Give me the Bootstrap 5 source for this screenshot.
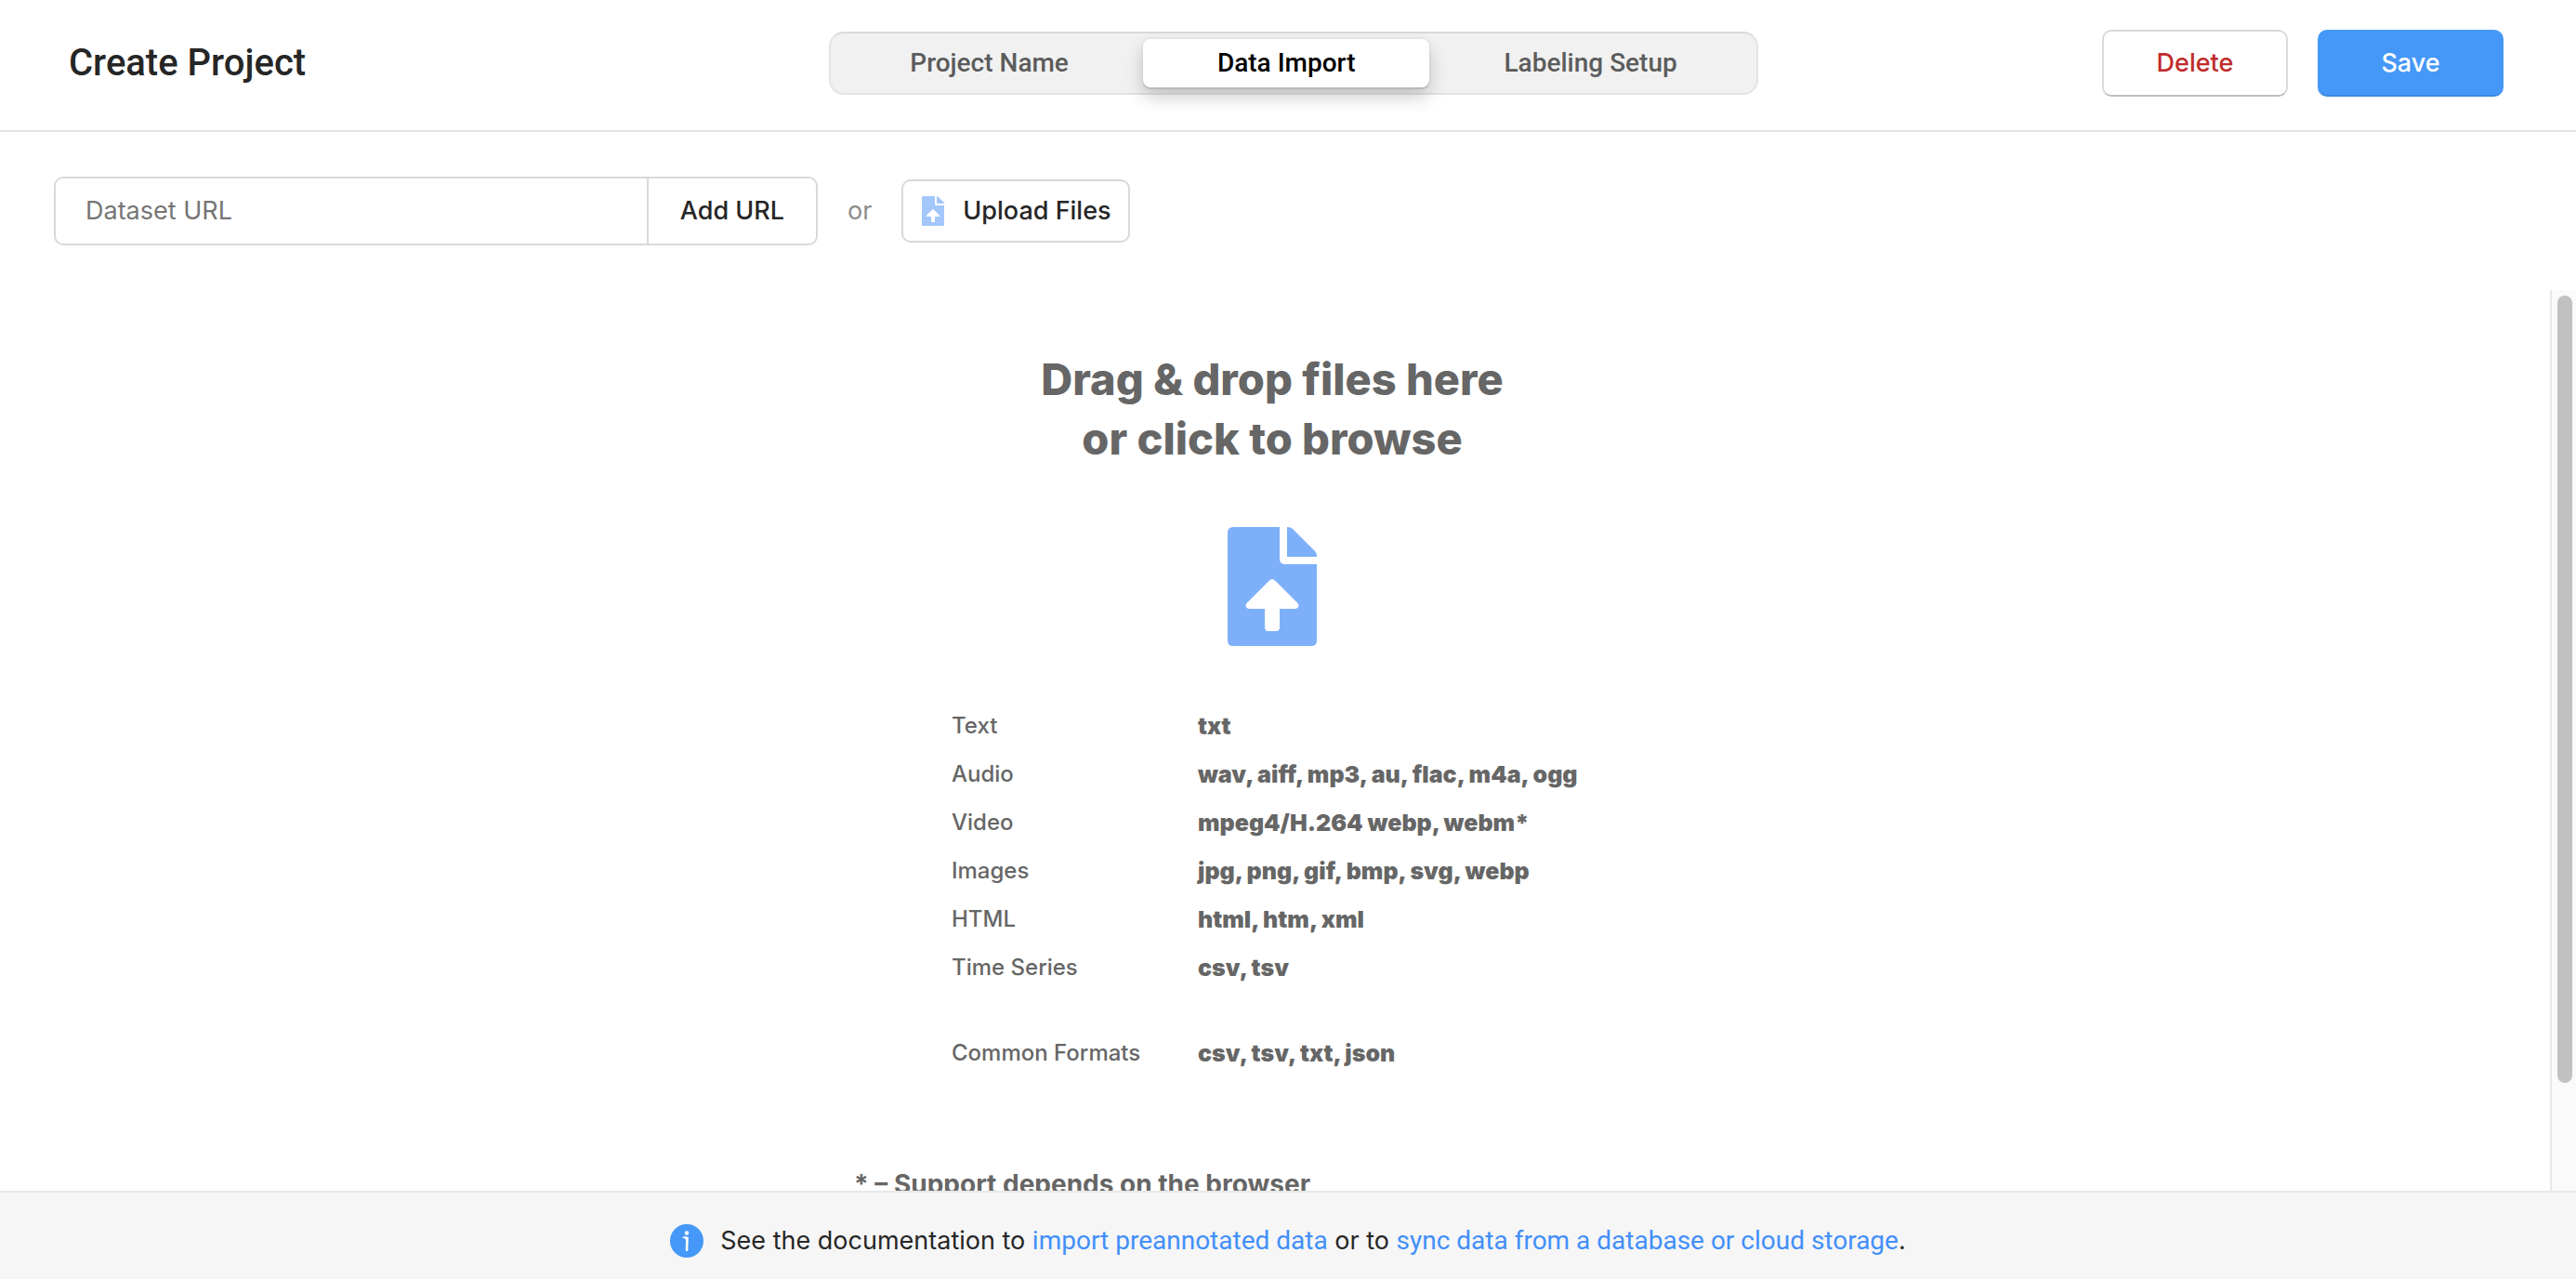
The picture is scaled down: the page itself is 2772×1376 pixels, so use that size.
<!DOCTYPE html>
<html lang="en">
<head>
<meta charset="utf-8">
<meta name="viewport" content="width=device-width, initial-scale=1">
<title>Create Project</title>
<link href="https://cdn.jsdelivr.net/npm/bootstrap@5.3.0/dist/css/bootstrap.min.css" rel="stylesheet">
<style>
  body { font-family: Inter, "Liberation Sans", sans-serif; font-size: 27px; line-height: 36px; color: #262626; }
  .topbar { padding: 32px 78px 36px 74px; border-bottom: 2px solid #e3e3e3; font-family: Roboto, sans-serif; }
  .topbar h1 { font-size: 40px; line-height: 48px; font-weight: 500; }
  .steps { height: 68px; padding: 6px 5px; border: 2px solid #e3e3e3; border-top-color: #d9d9d9; border-radius: 16px; background: #f1f1f1; }
  .step { padding: 0 80px; border: 0; border-radius: 8px; background: none; font-size: 28px; line-height: 52px; font-weight: 500; color: #5c5c5c; }
  .step.active { background: #fff; color: #000; box-shadow: 0 2px 0 #bababa, 0 10px 20px rgba(0,0,0,.2), 0 0 4px rgba(0,0,0,.08); }
  .act { min-width: 200px; height: 72px; border: 2px solid #d9d9d9; border-bottom-color: #bfbfbf; border-radius: 10px; font-family: Inter, sans-serif; font-size: 27px; font-weight: 500; }
  .act-delete, .act-delete:hover { color: #c02b2b; background: #fff; }
  .act-save, .act-save:hover { color: #fff; background: #4598f7; border-color: #4598f7; border-bottom-color: #3c88e0; }
  .toolbar { padding: 48px 64px 48px 58px; gap: 32px; }
  .url-group { width: 822px; height: 74px; border: 2px solid #d9d9d9; border-radius: 10px; }
  .url-group input { border: 0; padding: 0 32px; min-width: 0; outline: 0; background: none; }
  .url-group input::placeholder { color: #757575; opacity: 1; }
  .url-group button { min-width: 182px; border: 0; border-left: 2px solid #d9d9d9; background: none; font-weight: 500; color: #262626; }
  .or-word { color: #8c8c8c; }
  .upload { min-width: 246px; height: 68px; gap: 20px; padding: 0 16px 0 20px; border: 2px solid #d9d9d9; border-radius: 10px; background: #fff; font-weight: 500; color: #262626; }
  .upload svg { color: #a3c6fb; }
  .work { min-height: 0; }
  .drop-scroll { min-width: 0; padding: 64px 64px 0 58px; color: #666; }
  .drop-title { font-size: 47px; line-height: 64px; font-weight: 800; margin-bottom: 63px; }
  .drop-icon { color: #7eb0f9; margin-bottom: 60px; }
  .formats { width: 690px; font-size: 24px; line-height: 52px; }
  .formats th { width: 265px; padding: 0; font-weight: 500; }
  .formats td { padding: 0; font-size: 25px; font-weight: 900; }
  .formats .common th, .formats .common td { padding-top: 40px; }
  .footnote { width: 900px; margin-top: 95px; font-size: 28px; line-height: 40px; font-weight: 700; }
  .rail { width: 28px; padding: 6px 4px 0 6px; border-left: 2px solid #e8e8e8; background: #fafafa; }
  .rail-thumb { height: 88%; border-radius: 8px; background: #c1c1c1; }
  .docbar { padding: 34px 32px 23px; gap: 18px; border-top: 2px solid #e8e8e8; background: #f6f6f6; }
  .docbar a { font-family: Roboto, sans-serif; font-size: 28px; color: #428ffa; }
</style>
<script src="https://cdn.jsdelivr.net/npm/bootstrap@5.3.0/dist/js/bootstrap.bundle.min.js"></script>
</head>
<body class="vh-100 overflow-hidden d-flex flex-column bg-white">
<svg class="d-none" aria-hidden="true">
  <symbol id="file-up" viewBox="0 0 96 128">
    <path fill="currentColor" fill-rule="evenodd" d="M6 0H56V34Q56 40 62 40H96V122Q96 128 90 128H6Q0 128 0 122V6Q0 0 6 0ZM45 57.500 21 81.500C18 84.500 20 88 24 88H40V108Q40 112 44 112H52Q56 112 56 108V88H72C76 88 78 84.500 75 81.500L51 57.500Q48 54.500 45 57.500Z"/>
    <path fill="currentColor" d="M64 0Q68 0 70 2L94 26Q96 28 96 32H64Z"/>
  </symbol>
</svg>

<header class="topbar d-flex align-items-center">
  <h1 class="m-0 flex-grow-1 w-25">Create Project</h1>
  <nav class="steps d-flex flex-shrink-0 ms-3" aria-label="Steps">
    <button type="button" class="step">Project Name</button>
    <button type="button" class="step active" aria-current="step">Data Import</button>
    <button type="button" class="step">Labeling Setup</button>
  </nav>
  <div class="d-flex justify-content-end flex-grow-1 w-25">
    <button type="button" class="btn act act-delete me-3">Delete</button>
    <button type="button" class="btn act act-save ms-3">Save</button>
  </div>
</header>

<form class="toolbar d-flex align-items-center">
  <div class="url-group d-flex">
    <input type="url" class="flex-grow-1" placeholder="Dataset URL" aria-label="Dataset URL">
    <button type="submit">Add URL</button>
  </div>
  <span class="or-word">or</span>
  <button type="button" class="upload d-flex align-items-center">
    <svg width="24" height="32" aria-hidden="true"><use href="#file-up"/></svg>
    <span>Upload Files</span>
  </button>
</form>

<main class="work flex-grow-1 d-flex">
  <section class="drop-scroll flex-grow-1 overflow-hidden d-flex flex-column align-items-center">
    <h2 class="drop-title text-center flex-shrink-0">Drag &amp; drop files here<br>or click to browse</h2>
    <svg class="drop-icon flex-shrink-0" width="96" height="128" aria-hidden="true"><use href="#file-up"/></svg>
    <table class="formats flex-shrink-0">
      <tbody>
        <tr><th scope="row">Text</th><td>txt</td></tr>
        <tr><th scope="row">Audio</th><td>wav, aiff, mp3, au, flac, m4a, ogg</td></tr>
        <tr><th scope="row">Video</th><td>mpeg4/H.264 webp, webm*</td></tr>
        <tr><th scope="row">Images</th><td>jpg, png, gif, bmp, svg, webp</td></tr>
        <tr><th scope="row">HTML</th><td>html, htm, xml</td></tr>
        <tr><th scope="row">Time Series</th><td>csv, tsv</td></tr>
        <tr class="common"><th scope="row">Common Formats</th><td>csv, tsv, txt, json</td></tr>
      </tbody>
    </table>
    <p class="footnote mb-0 flex-shrink-0">* – Support depends on the browser</p>
  </section>
  <div class="rail flex-shrink-0" aria-hidden="true"><div class="rail-thumb"></div></div>
</main>

<footer class="docbar d-flex justify-content-center">
  <svg class="flex-shrink-0" width="36" height="36" viewBox="0 0 36 36" aria-hidden="true">
    <circle cx="18" cy="18" r="18" fill="#4598f7"/>
    <circle cx="18" cy="9.500" r="2.200" fill="#fff"/>
    <path d="M13.500 13.800C15.500 13 18 13 19.800 14L19.300 28.500Q18 29.800 16.800 28.500L17 16.500Q15.500 14.800 13.500 14.800Z" fill="#fff"/>
  </svg>
  <span>See the documentation to <a href="#" class="text-decoration-none">import preannotated data</a> or to <a href="#" class="text-decoration-none">sync data from a database or cloud storage</a>.</span>
</footer>
</body>
</html>
